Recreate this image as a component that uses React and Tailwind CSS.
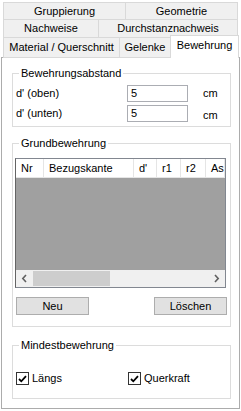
const FONT = "font-['Liberation_Sans',Arial,sans-serif]";

function Tab({ children, className = '' }) {
  return (
    <div className={`flex items-center justify-center border border-[#d9d9d9] bg-[#f0f0f0] ${className}`}>
      {children}
    </div>
  );
}

function Group({ title, className = '', children }) {
  return (
    <div className={`ml-[10px] w-[219px] border border-[#dcdcdc] ${className}`}>
      <div className="-mt-[7px] ml-[6px] w-fit bg-white px-[2px] leading-[13px]">{title}</div>
      {children}
    </div>
  );
}

function Chevron({ dir }) {
  return (
    <svg width="7" height="9" viewBox="0 0 7 9" fill="none" stroke="#606060" strokeWidth="1.6">
      {dir === 'left' ? <polyline points="5,1 1.8,4.5 5,8" /> : <polyline points="2,1 5.2,4.5 2,8" />}
    </svg>
  );
}

function Check({ label, className = '' }) {
  return (
    <div className={`flex items-center ${className}`}>
      <div className="flex h-[13px] w-[13px] items-center justify-center border border-[#333] bg-white">
        <svg width="9" height="8" viewBox="0 0 9 8" fill="none" stroke="#000" strokeWidth="1.8">
          <polyline points="1,4 3.3,6.3 8,1.2" />
        </svg>
      </div>
      <span className="ml-[3px]">{label}</span>
    </div>
  );
}

const COLS = [
  { name: 'Nr', w: 'w-[28px]' },
  { name: 'Bezugskante', w: 'w-[90px]' },
  { name: "d'", w: 'w-[23px]' },
  { name: 'r1', w: 'w-[24px]' },
  { name: 'r2', w: 'w-[25px]' },
  { name: 'As', w: 'flex-1' },
];

export default function App() {
  return (
    <div className={`h-[411px] w-[241px] bg-white text-[11px] leading-[13px] text-black ${FONT}`}>
      {/* tab rows */}
      <div className="pl-[3px] pt-[2px]">
        <div className="flex h-[18px] w-[235px]">
          <Tab className="w-[123px]">Gruppierung</Tab>
          <Tab className="-ml-px flex-1">Geometrie</Tab>
        </div>
        <div className="-mt-px flex h-[19px] w-[235px]">
          <Tab className="w-[96px]">Nachweise</Tab>
          <Tab className="-ml-px flex-1">Durchstanznachweis</Tab>
        </div>
        <div className="relative z-10 -mt-px flex h-[21px] w-[236px] items-end">
          <Tab className="h-[21px] w-[117px]">Material / Querschnitt</Tab>
          <Tab className="-ml-px h-[21px] w-[52px]">Gelenke</Tab>
          <div className="-ml-px flex h-[23px] w-[69px] justify-center border border-b-0 border-[#d9d9d9] bg-white pt-[3px]">
            Bewehrung
          </div>
        </div>
      </div>

      {/* panel */}
      <div className="-mt-px ml-[1px] h-[352px] w-[239px] border border-[#acacac] bg-white pt-[15px]">
        <Group title="Bewehrungsabstand" className="h-[54px]">
          <div className="mt-[5px] flex h-[17px] items-center">
            <span className="w-[114px] pl-[3px]">d' (oben)</span>
            <div className="flex h-[17px] w-[61px] items-center border border-[#abadb3] pl-[3px]">5</div>
            <span className="ml-[15px]">cm</span>
          </div>
          <div className="mt-[3px] flex h-[17px] items-center">
            <span className="w-[114px] pl-[3px]">d' (unten)</span>
            <div className="flex h-[17px] w-[61px] items-center border border-[#abadb3] pl-[3px]">5</div>
            <span className="ml-[15px] mt-[3px]">cm</span>
          </div>
        </Group>

        <Group title="Grundbewehrung" className="mt-[16px] h-[184px]">
          <div className="ml-[2px] mt-[8px] flex h-[130px] w-[211px] flex-col border border-[#828790] border-l-[#646464] bg-[#a0a0a0]">
            <div className="flex h-[19px] border-b border-[#e5e5e5] bg-white">
              {COLS.map((c) => (
                <div key={c.name} className={`${c.w} flex items-center border-r border-[#e5e5e5] pl-[5px]`}>
                  {c.name}
                </div>
              ))}
            </div>
            <div className="flex-1" />
            <div className="flex h-[17px] items-center bg-[#f0f0f0]">
              <div className="flex w-[17px] justify-center"><Chevron dir="left" /></div>
              <div className="h-[15px] w-[77px] bg-[#cdcdcd]" />
              <div className="flex-1" />
              <div className="flex w-[17px] justify-center"><Chevron dir="right" /></div>
            </div>
          </div>
          <div className="ml-[3px] mt-[9px] flex w-[211px] justify-between">
            <button className="flex h-[18px] w-[73px] items-center justify-center border border-[#adadad] bg-[#e1e1e1]">Neu</button>
            <button className="flex h-[18px] w-[73px] items-center justify-center border border-[#adadad] bg-[#e1e1e1]">Löschen</button>
          </div>
        </Group>

        <Group title="Mindestbewehrung" className="mt-[18px] h-[54px]">
          <div className="ml-[3px] mt-[20px] flex">
            <Check label="Längs" className="w-[112px]" />
            <Check label="Querkraft" />
          </div>
        </Group>
      </div>
    </div>
  );
}
